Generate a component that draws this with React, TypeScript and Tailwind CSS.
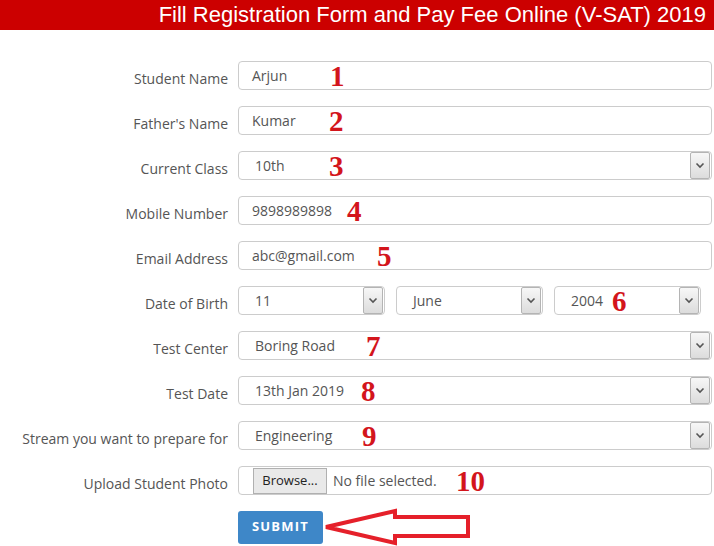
import React from "react";

const Num = ({ n, left }: { n: string; left: number }) => (
  <span
    className="absolute top-1/2 -translate-y-1/2 leading-none text-[29px] font-bold text-[#d3151c] pointer-events-none"
    style={{ left, fontFamily: '"Liberation Serif", serif' }}
  >
    {n}
  </span>
);

const Chevron = () => (
  <svg width="10" height="7" viewBox="0 0 10 7">
    <path d="M1.5 1.5 L5 5 L8.5 1.5" fill="none" stroke="#555" strokeWidth="1.6" />
  </svg>
);

const SelectBox = ({
  value,
  num,
  numLeft,
  className,
}: {
  value: string;
  num?: string;
  numLeft?: number;
  className?: string;
}) => (
  <div
    className={`relative h-[29px] border border-[#cccccc] rounded-[4px] bg-white flex items-center pl-[16px] text-[14px] text-[#555] ${className ?? "flex-1"}`}
  >
    <span>{value}</span>
    <div className="ml-auto mr-[1px] h-[27px] w-[20px] border border-[#b4b4b4] rounded-[2px] bg-gradient-to-b from-[#f7f7f7] to-[#dcdcdc] flex items-center justify-center">
      <Chevron />
    </div>
    {num && <Num n={num} left={numLeft ?? 0} />}
  </div>
);

const TextBox = ({ value, num, numLeft }: { value: string; num: string; numLeft: number }) => (
  <div className="relative flex-1 h-[29px] border border-[#cccccc] rounded-[4px] bg-white flex items-center pl-[13px] text-[14px] text-[#555]">
    <span>{value}</span>
    <Num n={num} left={numLeft} />
  </div>
);

const Row = ({ label, children }: { label: string; children: React.ReactNode }) => (
  <div className="flex h-[29px]">
    <div className="w-[238px] pr-[10px] text-right text-[14px] text-[#555] pt-[7px] leading-[22px] whitespace-nowrap">
      {label}
    </div>
    <div className="flex flex-1 mr-[2px]">{children}</div>
  </div>
);

export default function App() {
  return (
    <div
      className="w-[714px] h-[546px] bg-white overflow-hidden"
      style={{ fontFamily: '"Open Sans", "Liberation Sans", sans-serif' }}
    >
      <div
        className="h-[30px] bg-[#cc0000] text-white text-[22px] flex items-center justify-end pr-[8px] leading-none"
        style={{ fontFamily: '"Liberation Sans", Arial, sans-serif' }}
      >
        Fill Registration Form and Pay Fee Online (V-SAT) 2019
      </div>
      <div className="flex flex-col gap-[16px] pt-[31px]">
        <Row label="Student Name">
          <TextBox value="Arjun" num="1" numLeft={91} />
        </Row>
        <Row label="Father's Name">
          <TextBox value="Kumar" num="2" numLeft={90} />
        </Row>
        <Row label="Current Class">
          <SelectBox value="10th" num="3" numLeft={90} />
        </Row>
        <Row label="Mobile Number">
          <TextBox value="9898989898" num="4" numLeft={108} />
        </Row>
        <Row label="Email Address">
          <TextBox value="abc@gmail.com" num="5" numLeft={138} />
        </Row>
        <Row label="Date of Birth">
          <div className="flex gap-[11px]">
            <SelectBox value="11" className="w-[147px]" />
            <SelectBox value="June" className="w-[147px]" />
            <SelectBox value="2004" className="w-[147px]" num="6" numLeft={57} />
          </div>
        </Row>
        <Row label="Test Center">
          <SelectBox value="Boring Road" num="7" numLeft={127} />
        </Row>
        <Row label="Test Date">
          <SelectBox value="13th Jan 2019" num="8" numLeft={122} />
        </Row>
        <Row label="Stream you want to prepare for">
          <SelectBox value="Engineering" num="9" numLeft={123} />
        </Row>
        <Row label="Upload Student Photo">
          <div className="relative flex-1 h-[29px] border border-[#cccccc] rounded-[4px] bg-white flex items-center pl-[14px] text-[14px] text-[#555]">
            <div className="h-[26px] w-[74px] border border-[#b0b0b0] bg-[#e9e9e9] flex items-center justify-center text-[13px] text-[#222]">
              Browse...
            </div>
            <span className="ml-[6px]">No file selected.</span>
            <Num n="10" left={217} />
          </div>
        </Row>
        <div className="flex items-center -mt-[3px]">
          <div className="w-[238px]" />
          <div className="w-[85px] h-[33px] rounded-[3px] bg-[#3e87c8] text-white font-bold text-[13px] tracking-[1.2px] flex items-center justify-center">
            SUBMIT
          </div>
          <svg width="150" height="38" viewBox="0 0 150 38">
            <path
              d="M3 19 L72 3 L72 9 L145 9 L145 28 L72 28 L72 35 Z"
              fill="none"
              stroke="#e5202a"
              strokeWidth="4"
              strokeLinejoin="miter"
            />
          </svg>
        </div>
      </div>
    </div>
  );
}
